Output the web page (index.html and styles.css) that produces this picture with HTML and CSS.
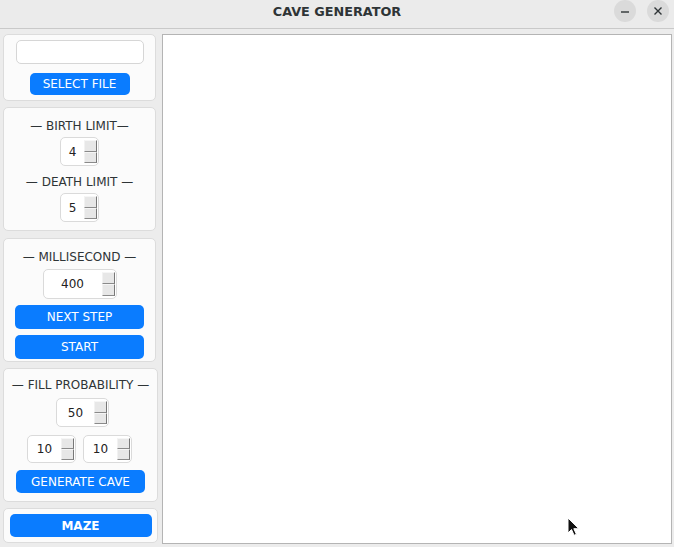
FILE: index.html
```html
<!DOCTYPE html>
<html>
<head>
<meta charset="utf-8">
<link rel="stylesheet" href="styles.css">
</head>
<body>
<div class="window">
  <header class="titlebar">
    <div class="title">CAVE GENERATOR</div>
    <div class="wm-buttons">
      <div class="wm-btn"><svg width="10" height="10" viewBox="0 0 10 10"><path d="M1 6h8" stroke="#2e3436" stroke-width="1.4"/></svg></div>
      <div class="wm-btn"><svg width="10" height="10" viewBox="0 0 10 10"><path d="M1.5 1.5l7 7M8.5 1.5l-7 7" stroke="#2e3436" stroke-width="1.4"/></svg></div>
    </div>
  </header>
  <main class="content">
    <aside class="sidebar">
      <section class="card card-file">
        <div class="textfield"></div>
        <button class="btn btn-select">SELECT FILE</button>
      </section>
      <section class="card card-limits">
        <div class="label">— BIRTH LIMIT—</div>
        <div class="spin spin-small"><span class="val">4</span><span class="arrows"><i></i><i></i></span></div>
        <div class="label label-gap">— DEATH LIMIT —</div>
        <div class="spin spin-small"><span class="val">5</span><span class="arrows"><i></i><i></i></span></div>
      </section>
      <section class="card card-ms">
        <div class="label">— MILLISECOND —</div>
        <div class="spin spin-wide"><span class="val">400</span><span class="arrows"><i></i><i></i></span></div>
        <button class="btn btn-full btn-next">NEXT STEP</button>
        <button class="btn btn-full btn-start">START</button>
      </section>
      <section class="card card-fill wide">
        <div class="label">— FILL PROBABILITY —</div>
        <div class="spin spin-mid"><span class="val">50</span><span class="arrows"><i></i><i></i></span></div>
        <div class="spin-row">
          <div class="spin spin-pair"><span class="val">10</span><span class="arrows"><i></i><i></i></span></div>
          <div class="spin spin-pair"><span class="val">10</span><span class="arrows"><i></i><i></i></span></div>
        </div>
        <button class="btn btn-full btn-gen">GENERATE CAVE</button>
      </section>
      <section class="card card-maze wide">
        <button class="btn btn-maze">MAZE</button>
      </section>
    </aside>
    <div class="canvas"></div>
  </main>
  <svg class="cursor" width="14" height="20" viewBox="0 0 14 20"><path d="M1 1v15l3.5-3.5 2.6 5.8 2.3-1-2.6-5.6h5z" fill="#111" stroke="#fff" stroke-width="1"/></svg>
</div>
</body>
</html>
```
FILE: styles.css
```css
* { box-sizing: border-box; }
html, body { margin: 0; padding: 0; }
body {
  width: 674px;
  height: 547px;
  background: #ececec;
  font-family: "DejaVu Sans", "Liberation Sans", sans-serif;
  font-size: 12px;
  color: #2e3436;
  overflow: hidden;
}
.window { position: relative; width: 674px; height: 547px; }
.titlebar {
  height: 29px;
  background: #ebebeb;
  border-bottom: 1px solid #c9c9c9;
  display: flex;
  align-items: center;
  justify-content: center;
  position: relative;
}
.title {
  font-weight: bold;
  font-size: 12.8px;
  color: #2e3436;
  margin-top: -6px;
}
.wm-buttons {
  position: absolute;
  right: 5px;
  top: 0;
  display: flex;
  gap: 11px;
}
.wm-btn {
  width: 22px;
  height: 22px;
  border-radius: 50%;
  background: #dadada;
  display: flex;
  align-items: center;
  justify-content: center;
}
.content {
  display: flex;
  padding: 5px 0 0 3px;
  gap: 4px;
}
.sidebar {
  width: 155px;
  display: flex;
  flex-direction: column;
  gap: 6px;
}
.card {
  width: 153px;
  background: #fbfbfb;
  border: 1px solid #dcdcdc;
  border-radius: 5px;
  display: flex;
  flex-direction: column;
  align-items: center;
}
.card.wide { width: 155px; }
.card-file { height: 67px; padding-top: 5px; }
.textfield {
  width: 128px;
  height: 24px;
  background: #fff;
  border: 1px solid #d6d6d6;
  border-radius: 5px;
}
.btn {
  border: none;
  background: #0a7cff;
  color: #fff;
  font-family: "DejaVu Sans", "Liberation Sans", sans-serif;
  font-size: 12px;
  border-radius: 5px;
  padding: 0;
  display: flex;
  align-items: center;
  justify-content: center;
}
.btn-select { width: 100px; height: 22px; margin-top: 9px; }
.card-limits { height: 124px; padding-top: 10px; }
.label { height: 16px; line-height: 16px; }
.label-gap { margin-top: 8px; }
.spin {
  background: #fff;
  border: 1px solid #dadada;
  border-radius: 5px;
  display: flex;
  align-items: center;
  padding: 2px 1px 2px 0;
  margin-top: 3px;
  color: #222;
  font-size: 12px;
}
.spin .val { flex: 1; text-align: center; }
.arrows {
  width: 13px;
  display: flex;
  flex-direction: column;
  align-self: stretch;
}
.arrows i {
  flex: 1;
  display: block;
  background: #e7e7e7;
  border-top: 1px solid #f6f6f6;
  border-left: 1px solid #f2f2f2;
  border-right: 1px solid #777;
  border-bottom: 1px solid #8a8a8a;
}
.spin-small { width: 39px; height: 29px; }
.spin-wide { width: 74px; height: 30px; margin-top: 4px; }
.spin-mid { width: 53px; height: 29px; margin-top: 5px; margin-left: 4px; }
.spin-row { display: flex; gap: 7px; margin-top: 8px; margin-left: -2px; }
.spin-pair { width: 49px; height: 28px; margin-top: 0; }
.card-ms { height: 124px; padding-top: 10px; margin-top: 1px; }
.btn-full { width: 129px; height: 24px; }
.btn-next { margin-top: 6px; }
.btn-start { margin-top: 6px; }
.card-fill { height: 134px; padding-top: 8px; }
.btn-gen { height: 23px; margin-top: 7px; }
.card-maze { height: 35px; justify-content: center; }
.btn-maze { width: 142px; height: 23px; font-weight: bold; font-size: 12px; }
.canvas {
  width: 510px;
  height: 510px;
  background: #fff;
  border: 1px solid #b4b4b4;
}
.cursor { position: absolute; left: 567px; top: 517px; }
```
